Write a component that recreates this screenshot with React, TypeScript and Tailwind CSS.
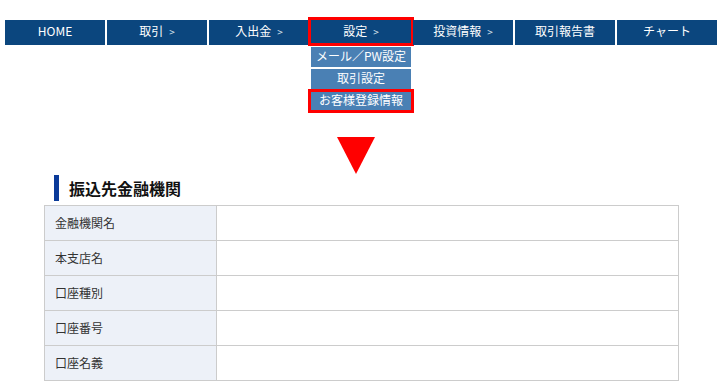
const navItems = [
  { label: 'HOME', arrow: false },
  { label: '取引', arrow: true },
  { label: '入出金', arrow: true },
  { label: '設定', arrow: true },
  { label: '投資情報', arrow: true },
  { label: '取引報告書', arrow: false },
  { label: 'チャート', arrow: false },
];

const subItems = ['メール／PW設定', '取引設定', 'お客様登録情報'];

const rows = ['金融機関名', '本支店名', '口座種別', '口座番号', '口座名義'];

export default function App() {
  return (
    <div
      className="relative w-[720px] h-[389px] bg-white overflow-hidden"
      style={{ fontFamily: '"Noto Sans CJK JP", "Liberation Sans", sans-serif' }}
    >
      <nav className="flex gap-[2px] mt-[20px] ml-[5px]">
        {navItems.map((item) => (
          <div
            key={item.label}
            className="relative w-[100px] h-[25px] pb-[3px] bg-[#0b467e] text-white text-[12px] flex items-center justify-center"
          >
            <span>{item.label}</span>
            {item.arrow && <span className="ml-[6px] text-[10px] text-[#dfe6ee]">&gt;</span>}
            {item.label === '設定' && (
              <>
                <div className="absolute left-[-3px] top-[-3px] w-[106px] h-[29px] border-[3px] border-[#ff0000]" />
                <div className="absolute left-0 top-[27px] w-[100px] flex flex-col gap-[2px]">
                  {subItems.map((sub, i) => (
                    <div
                      key={sub}
                      className="relative h-[20px] pb-[2px] bg-[#4a80b4] text-white text-[12px] flex items-center justify-center"
                    >
                      {sub}
                      {i === 2 && (
                        <div className="absolute left-[-3px] top-[-2px] w-[106px] h-[24px] border-[3px] border-[#ff0000]" />
                      )}
                    </div>
                  ))}
                </div>
              </>
            )}
          </div>
        ))}
      </nav>

      <div className="mt-[92px] ml-[337px] w-0 h-0 border-l-[19px] border-r-[19px] border-t-[37px] border-l-transparent border-r-transparent border-t-[#ff0000]" />

      <div className="flex items-center mt-[1px] ml-[54px] h-[26px]">
        <div className="w-[5px] h-[26px] bg-[#0a3a99]" />
        <h2 className="ml-[10px] text-[16px] leading-[26px] font-bold text-[#111]">振込先金融機関</h2>
      </div>

      <table className="mt-[4px] ml-[44px] w-[635px] border-collapse text-[12px] text-[#333]">
        <tbody>
          {rows.map((r) => (
            <tr key={r} className="h-[35px]">
              <th className="w-[172px] bg-[#edf1f8] border border-[#cccccc] text-left font-normal pl-[10px]">
                {r}
              </th>
              <td className="border border-[#cccccc]" />
            </tr>
          ))}
        </tbody>
      </table>
    </div>
  );
}
